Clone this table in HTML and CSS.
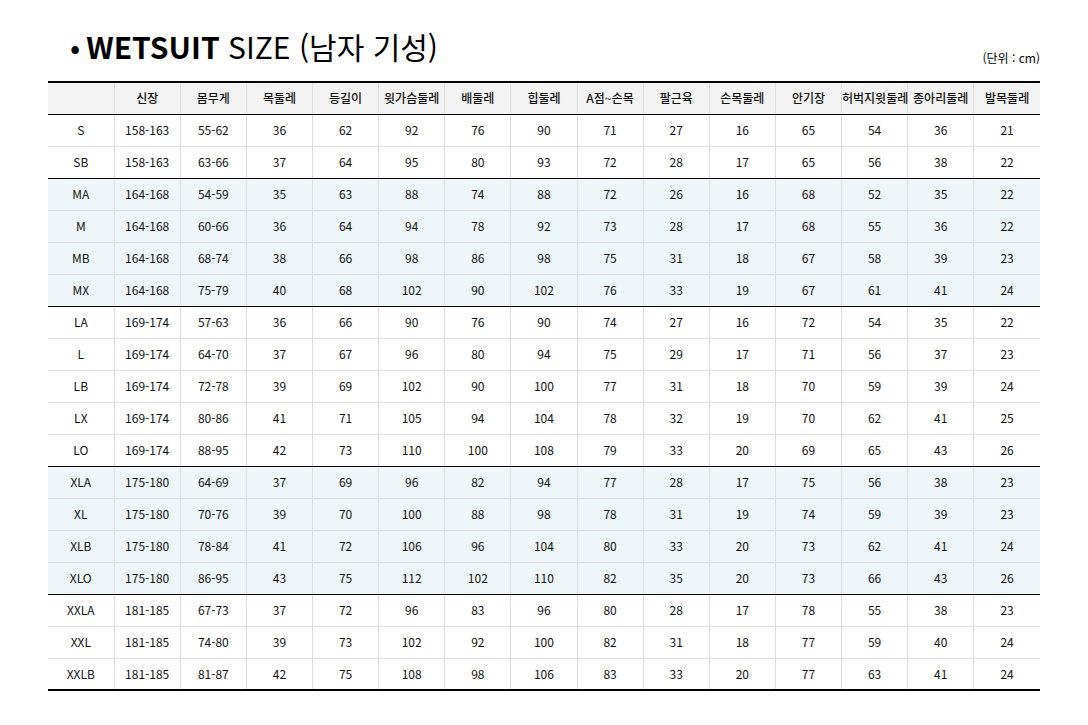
FILE: index.html
```html
<!DOCTYPE html>
<html lang="ko">
<head>
<meta charset="utf-8">
<link rel="stylesheet" href="styles.css">
</head>
<body>
<div class="page">
  <div class="head">
    <h1 class="title"><span class="dot">•</span><b>WETSUIT</b> SIZE (남자 기성)</h1>
    <div class="unit">(단위 : cm)</div>
  </div>
  <table class="size">
    <thead>
      <tr><th></th><th>신장</th><th>몸무게</th><th>목둘레</th><th>등길이</th><th>윗가슴둘레</th><th>배둘레</th><th>힙둘레</th><th>A점~손목</th><th>팔근육</th><th>손목둘레</th><th>안기장</th><th>허벅지윗둘레</th><th>종아리둘레</th><th>발목둘레</th></tr>
    </thead>
    <tbody>
      <tr><td>S</td><td>158-163</td><td>55-62</td><td>36</td><td>62</td><td>92</td><td>76</td><td>90</td><td>71</td><td>27</td><td>16</td><td>65</td><td>54</td><td>36</td><td>21</td></tr>
      <tr class="end"><td>SB</td><td>158-163</td><td>63-66</td><td>37</td><td>64</td><td>95</td><td>80</td><td>93</td><td>72</td><td>28</td><td>17</td><td>65</td><td>56</td><td>38</td><td>22</td></tr>
      <tr class="tint"><td>MA</td><td>164-168</td><td>54-59</td><td>35</td><td>63</td><td>88</td><td>74</td><td>88</td><td>72</td><td>26</td><td>16</td><td>68</td><td>52</td><td>35</td><td>22</td></tr>
      <tr class="tint"><td>M</td><td>164-168</td><td>60-66</td><td>36</td><td>64</td><td>94</td><td>78</td><td>92</td><td>73</td><td>28</td><td>17</td><td>68</td><td>55</td><td>36</td><td>22</td></tr>
      <tr class="tint"><td>MB</td><td>164-168</td><td>68-74</td><td>38</td><td>66</td><td>98</td><td>86</td><td>98</td><td>75</td><td>31</td><td>18</td><td>67</td><td>58</td><td>39</td><td>23</td></tr>
      <tr class="tint end"><td>MX</td><td>164-168</td><td>75-79</td><td>40</td><td>68</td><td>102</td><td>90</td><td>102</td><td>76</td><td>33</td><td>19</td><td>67</td><td>61</td><td>41</td><td>24</td></tr>
      <tr><td>LA</td><td>169-174</td><td>57-63</td><td>36</td><td>66</td><td>90</td><td>76</td><td>90</td><td>74</td><td>27</td><td>16</td><td>72</td><td>54</td><td>35</td><td>22</td></tr>
      <tr><td>L</td><td>169-174</td><td>64-70</td><td>37</td><td>67</td><td>96</td><td>80</td><td>94</td><td>75</td><td>29</td><td>17</td><td>71</td><td>56</td><td>37</td><td>23</td></tr>
      <tr><td>LB</td><td>169-174</td><td>72-78</td><td>39</td><td>69</td><td>102</td><td>90</td><td>100</td><td>77</td><td>31</td><td>18</td><td>70</td><td>59</td><td>39</td><td>24</td></tr>
      <tr><td>LX</td><td>169-174</td><td>80-86</td><td>41</td><td>71</td><td>105</td><td>94</td><td>104</td><td>78</td><td>32</td><td>19</td><td>70</td><td>62</td><td>41</td><td>25</td></tr>
      <tr class="end"><td>LO</td><td>169-174</td><td>88-95</td><td>42</td><td>73</td><td>110</td><td>100</td><td>108</td><td>79</td><td>33</td><td>20</td><td>69</td><td>65</td><td>43</td><td>26</td></tr>
      <tr class="tint"><td>XLA</td><td>175-180</td><td>64-69</td><td>37</td><td>69</td><td>96</td><td>82</td><td>94</td><td>77</td><td>28</td><td>17</td><td>75</td><td>56</td><td>38</td><td>23</td></tr>
      <tr class="tint"><td>XL</td><td>175-180</td><td>70-76</td><td>39</td><td>70</td><td>100</td><td>88</td><td>98</td><td>78</td><td>31</td><td>19</td><td>74</td><td>59</td><td>39</td><td>23</td></tr>
      <tr class="tint"><td>XLB</td><td>175-180</td><td>78-84</td><td>41</td><td>72</td><td>106</td><td>96</td><td>104</td><td>80</td><td>33</td><td>20</td><td>73</td><td>62</td><td>41</td><td>24</td></tr>
      <tr class="tint end"><td>XLO</td><td>175-180</td><td>86-95</td><td>43</td><td>75</td><td>112</td><td>102</td><td>110</td><td>82</td><td>35</td><td>20</td><td>73</td><td>66</td><td>43</td><td>26</td></tr>
      <tr><td>XXLA</td><td>181-185</td><td>67-73</td><td>37</td><td>72</td><td>96</td><td>83</td><td>96</td><td>80</td><td>28</td><td>17</td><td>78</td><td>55</td><td>38</td><td>23</td></tr>
      <tr><td>XXL</td><td>181-185</td><td>74-80</td><td>39</td><td>73</td><td>102</td><td>92</td><td>100</td><td>82</td><td>31</td><td>18</td><td>77</td><td>59</td><td>40</td><td>24</td></tr>
      <tr class="last"><td>XXLB</td><td>181-185</td><td>81-87</td><td>42</td><td>75</td><td>108</td><td>98</td><td>106</td><td>83</td><td>33</td><td>20</td><td>77</td><td>63</td><td>41</td><td>24</td></tr>
    </tbody>
  </table>
</div>
</body>
</html>
```

FILE: styles.css
```css
* { box-sizing: border-box; }
html, body { margin: 0; padding: 0; background: #fff; }
body {
  font-family: "Noto Sans CJK KR", "Noto Sans", sans-serif;
  color: #111;
}
.page {
  width: 1088px;
  padding: 22px 48px 0 48px;
}
.head {
  display: flex;
  justify-content: space-between;
  align-items: flex-end;
  height: 59px;
}
.title {
  margin: 0 0 13px 22px;
  font-size: 30px;
  font-weight: 400;
  line-height: 44px;
  color: #000;
}
.title b { font-weight: 700; }
.title .dot { margin-right: 6px; }
.unit {
  font-size: 12px;
  line-height: 16px;
  margin-bottom: 15px;
  color: #000;
}
.size {
  width: 992px;
  border-collapse: collapse;
  table-layout: fixed;
  border-top: 2px solid #000;
  border-bottom: 2px solid #000;
}
.size th, .size td {
  height: 32px;
  padding: 0;
  text-align: center;
  vertical-align: middle;
  font-size: 12px;
  line-height: 16px;
  border-left: 1px solid #dcdcdc;
  border-bottom: 1px solid #dedede;
  color: #111;
  white-space: nowrap;
}
.size th:first-child, .size td:first-child { border-left: none; }
.size th {
  background: #f3f3f3;
  font-weight: 500;
  border-bottom: 1px solid #000;
}
.size tr.tint td { background: #eef6f9; }
.size tr.end td { border-bottom: 1px solid #000; }
.size tr.last td { border-bottom: 2px solid #000; }
```
